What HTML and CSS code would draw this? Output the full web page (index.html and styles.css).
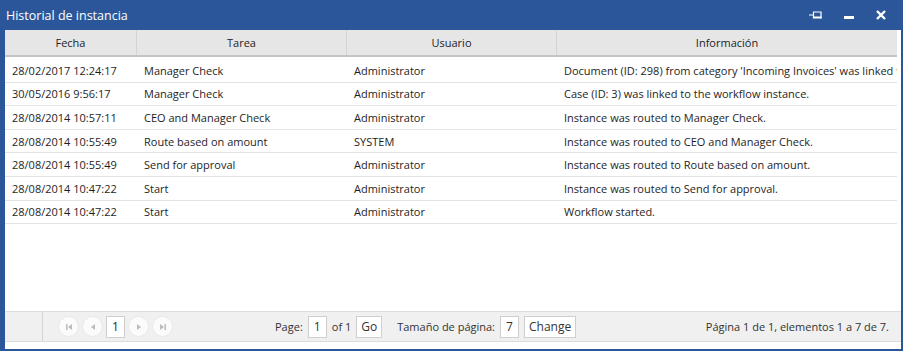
FILE: index.html
```html
<!DOCTYPE html>
<html lang="es">

<head>
    <meta charset="UTF-8">
    <title>Historial de instancia</title>
    <link rel="stylesheet" href="styles.css">
</head>

<body>
    <div class="window">
        <div class="titlebar">
            <span class="title">Historial de instancia</span>
            <div class="title-tools">
                <svg width="14" height="10" viewBox="0 0 14 10"><path d="M0 5h4.5M4.5 1.5v7M4.5 2h8M4.5 7.5h8" stroke="#fff" stroke-width="1.2" fill="none"/><path d="M12 2v6.5" stroke="#fff" stroke-width="1.2"/><rect x="4.5" y="6.5" width="8" height="2" fill="#fff"/></svg>
                <svg width="12" height="10" viewBox="0 0 12 10"><rect x="1" y="6" width="10" height="3" fill="#fff"/></svg>
                <svg width="12" height="10" viewBox="0 0 12 10"><path d="M2 1l8 8M10 1l-8 8" stroke="#fff" stroke-width="2.4"/></svg>
            </div>
        </div>
        <div class="body">
            <div class="grid">
                <div class="row head">
                    <div class="c c1">Fecha</div>
                    <div class="c c2">Tarea</div>
                    <div class="c c3">Usuario</div>
                    <div class="c c4">Información</div>
                </div>
                <div class="row">
                    <div class="c c1">28/02/2017 12:24:17</div>
                    <div class="c c2">Manager Check</div>
                    <div class="c c3">Administrator</div>
                    <div class="c c4">Document (ID: 298) from category 'Incoming Invoices' was linked to the workflow instance.</div>
                </div>
                <div class="row">
                    <div class="c c1">30/05/2016 9:56:17</div>
                    <div class="c c2">Manager Check</div>
                    <div class="c c3">Administrator</div>
                    <div class="c c4">Case (ID: 3) was linked to the workflow instance.</div>
                </div>
                <div class="row">
                    <div class="c c1">28/08/2014 10:57:11</div>
                    <div class="c c2">CEO and Manager Check</div>
                    <div class="c c3">Administrator</div>
                    <div class="c c4">Instance was routed to Manager Check.</div>
                </div>
                <div class="row">
                    <div class="c c1">28/08/2014 10:55:49</div>
                    <div class="c c2">Route based on amount</div>
                    <div class="c c3">SYSTEM</div>
                    <div class="c c4">Instance was routed to CEO and Manager Check.</div>
                </div>
                <div class="row">
                    <div class="c c1">28/08/2014 10:55:49</div>
                    <div class="c c2">Send for approval</div>
                    <div class="c c3">Administrator</div>
                    <div class="c c4">Instance was routed to Route based on amount.</div>
                </div>
                <div class="row">
                    <div class="c c1">28/08/2014 10:47:22</div>
                    <div class="c c2">Start</div>
                    <div class="c c3">Administrator</div>
                    <div class="c c4">Instance was routed to Send for approval.</div>
                </div>
                <div class="row">
                    <div class="c c1">28/08/2014 10:47:22</div>
                    <div class="c c2">Start</div>
                    <div class="c c3">Administrator</div>
                    <div class="c c4">Workflow started.</div>
                </div>
            </div>
            <div class="pager">
                <div class="pager-left"></div>
                <div class="pager-nav">
                    <span class="pbtn"><svg width="6" height="6" viewBox="0 0 6 6"><path d="M0 0h1.5v6H0zM6 0v6L2 3z" fill="#bbb"/></svg></span>
                    <span class="pbtn"><svg width="4" height="6" viewBox="0 0 4 6"><path d="M4 0v6L0 3z" fill="#bbb"/></svg></span>
                    <span class="pbox">1</span>
                    <span class="pbtn"><svg width="4" height="6" viewBox="0 0 4 6"><path d="M0 0v6l4-3z" fill="#bbb"/></svg></span>
                    <span class="pbtn"><svg width="6" height="6" viewBox="0 0 6 6"><path d="M0 0v6l4-3zM4.5 0H6v6H4.5z" fill="#bbb"/></svg></span>
                </div>
                <div class="pager-mid">
                    <span>Page:</span>
                    <span class="pbox">1</span>
                    <span>of 1</span>
                    <span class="pbutton">Go</span>
                    <span class="gap-label">Tamaño de página:</span>
                    <span class="pbox">7</span>
                    <span class="pbutton">Change</span>
                </div>
                <div class="pager-info">Página 1 de 1, elementos 1 a 7 de 7.</div>
            </div>
        </div>
    </div>
</body>

</html>
```

FILE: styles.css
```css
html, body {
    margin: 0;
    padding: 0;
}

body {
    font-family: "Open Sans", Arial, sans-serif;
    font-size: 11px;
    color: #1e1e1e;
}

.window {
    width: 903px;
    height: 351px;
    box-sizing: border-box;
    background: #2b579a;
    display: flex;
    flex-direction: column;
    padding: 0 2px 2px 5px;
}

.titlebar {
    height: 30px;
    display: flex;
    align-items: center;
    justify-content: space-between;
    color: #fff;
    margin-left: -1px;
}

.title {
    font-size: 12.5px;
    padding-left: 2px;
}

.title-tools {
    display: flex;
    align-items: center;
    gap: 20px;
    padding-right: 14px;
}

.body {
    flex: 1;
    background: #fff;
    display: flex;
    flex-direction: column;
}

.grid {
    flex: 1;
    padding-right: 4px;
    overflow: hidden;
}

.row {
    display: flex;
    height: 22.6px;
    border-bottom: 1px solid #e3e3e3;
    align-items: center;
}

.row.head {
    height: 25px;
    background: #e6e6e6;
    border-bottom: 2px solid #c4c4c4;
    margin-bottom: 2px;
}

.c {
    padding-left: 7px;
    white-space: nowrap;
    overflow: hidden;
    box-sizing: border-box;
}

.head .c {
    text-align: center;
    padding-left: 0;
    height: 100%;
    line-height: 25px;
    border-right: 1px solid #d4d4d4;
}

.head .c4 {
    border-right: none;
}

.c1 { width: 132px; }
.c2 { width: 210px; }
.c3 { width: 210px; }
.c4 { flex: 1; }

.pager {
    height: 29px;
    margin-bottom: 7px;
    background: #f0f0f0;
    border-top: 1px solid #dcdcdc;
    border-bottom: 1px solid #dcdcdc;
    display: flex;
    align-items: center;
}

.pager-left {
    width: 37px;
    align-self: stretch;
    border-right: 1px solid #d4d4d4;
}

.pager-nav {
    display: flex;
    align-items: center;
    gap: 3px;
    padding-left: 15px;
}

.pbtn {
    width: 21px;
    height: 21px;
    border-radius: 50%;
    background: #fbfbfb;
    border: 1px solid #e8e8e8;
    box-sizing: border-box;
    display: flex;
    align-items: center;
    justify-content: center;
}

.pbox {
    width: 19px;
    height: 22px;
    box-sizing: border-box;
    background: #fff;
    border: 1px solid #cfcfcf;
    display: inline-flex;
    align-items: center;
    justify-content: center;
    font-size: 12px;
}

.pager-mid {
    display: flex;
    align-items: center;
    gap: 5px;
    margin-left: 102px;
    color: #333;
}

.pbutton {
    height: 22px;
    box-sizing: border-box;
    padding: 0 4px;
    background: #fff;
    border: 1px solid #cfcfcf;
    display: inline-flex;
    align-items: center;
    font-size: 12px;
}

.gap-label {
    margin-left: 10px;
}

.pager-info {
    margin-left: auto;
    padding-right: 12px;
    color: #333;
}
```
